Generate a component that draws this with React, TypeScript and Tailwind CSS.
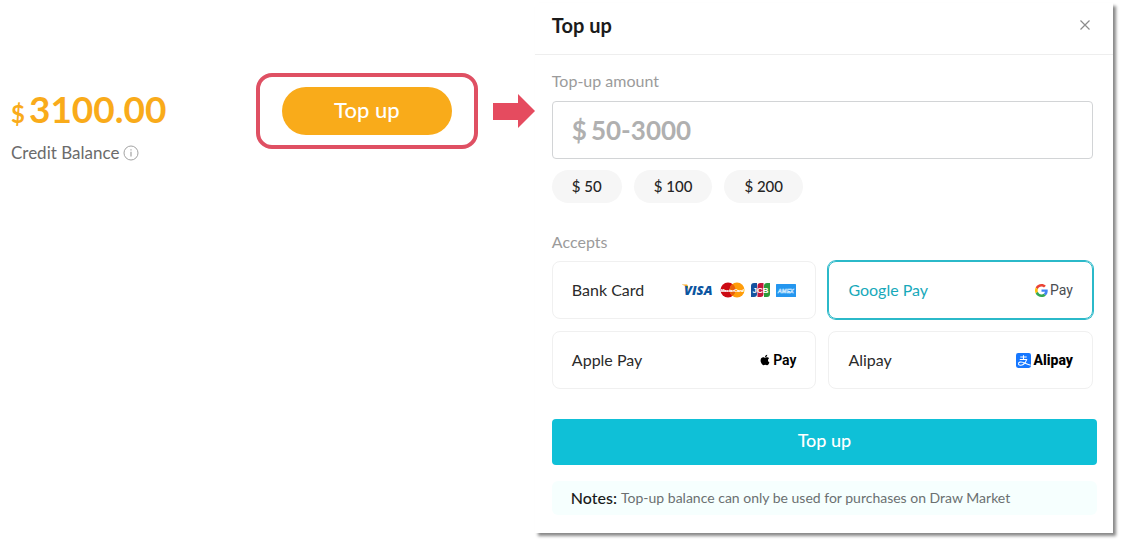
import { useState } from 'react'
import type { ReactNode } from 'react'
import { FaApple } from 'react-icons/fa'
import clsx from 'clsx'

const presets = [50, 100, 200]

function CardLogos() {
  return (
    <span className="flex items-center gap-[6px]">
      <svg width="32" height="20" viewBox="0 0 32 20" aria-label="Visa">
        <path d="M0 4.500h4.200c.9 0 1.400.4 1.600 1.200l.8 4.500C5.500 7.500 3.500 5.600 0 4.800z" fill="#f5a623" />
        <text x="2" y="15" fontSize="13" fontWeight="800" fontStyle="italic" fontFamily="Open Sans, sans-serif" fill="#0b55a0">
          VISA
        </text>
      </svg>
      <svg width="25" height="16" viewBox="0 0 25 16" aria-label="MasterCard">
        <circle cx="8" cy="8" r="7.500" fill="#cc0a14" />
        <circle cx="17" cy="8" r="7.500" fill="#ff9d0a" />
        <path d="M12.500 2a7.500 7.500 0 0 1 0 12a7.500 7.500 0 0 1 0-12z" fill="#e9600c" />
        <text x="12.300" y="9.600" textAnchor="middle" fontSize="4.200" fontWeight="800" fontStyle="italic" fontFamily="Liberation Sans, sans-serif" fill="#fff" stroke="#fff" strokeWidth="0.200">
          MasterCard
        </text>
      </svg>
      <svg width="19" height="14" viewBox="0 0 19 14" aria-label="JCB">
        <path d="M3 0h3v11a3 3 0 0 1-3 3H0V3a3 3 0 0 1 3-3z" fill="#16539f" />
        <path d="M9.500 0h3v11a3 3 0 0 1-3 3h-3V3a3 3 0 0 1 3-3z" fill="#c4183c" />
        <path d="M16 0h3v11a3 3 0 0 1-3 3h-3V3a3 3 0 0 1 3-3z" fill="#2c9a3c" />
        <text x="9.500" y="9.800" textAnchor="middle" fontSize="8" fontWeight="700" fontFamily="Liberation Sans, sans-serif" fill="#fff">
          JCB
        </text>
      </svg>
      <svg width="20" height="13" viewBox="0 0 20 13" aria-label="American Express">
        <rect width="20" height="13" rx="0.500" fill="#2496ef" />
        <text x="9.800" y="8.600" textAnchor="middle" fontSize="5.500" fontWeight="700" fontStyle="italic" fontFamily="Liberation Sans, sans-serif" fill="#2496ef" stroke="#d8eeff" strokeWidth="0.500">
          AMEX
        </text>
      </svg>
    </span>
  )
}

function GooglePayLogo() {
  return (
    <span className="flex items-center gap-[2px] text-[#4a4d51]">
      <svg width="13" height="13" viewBox="0 0 48 48" aria-hidden="true">
        <path fill="#EA4335" d="M24 9.500c3.540 0 6.710 1.220 9.210 3.600l6.850-6.850C35.900 2.380 30.470 0 24 0 14.620 0 6.510 5.380 2.560 13.220l7.980 6.190C12.430 13.720 17.740 9.500 24 9.500z" />
        <path fill="#4285F4" d="M46.980 24.550c0-1.570-.15-3.090-.38-4.550H24v9.020h12.940c-.58 2.960-2.260 5.480-4.780 7.180l7.730 6c4.510-4.180 7.090-10.360 7.090-17.650z" />
        <path fill="#FBBC05" d="M10.530 28.590c-.48-1.450-.76-2.990-.76-4.590s.27-3.140.76-4.590l-7.980-6.190C.92 16.460 0 20.120 0 24c0 3.880.92 7.540 2.560 10.780l7.970-6.190z" />
        <path fill="#34A853" d="M24 48c6.480 0 11.930-2.130 15.890-5.810l-7.730-6c-2.150 1.450-4.920 2.300-8.160 2.300-6.260 0-11.570-4.220-13.470-9.910l-7.980 6.190C6.510 42.620 14.620 48 24 48z" />
      </svg>
      <span className="font-[Roboto,sans-serif] text-sm">Pay</span>
    </span>
  )
}

function ApplePayLogo() {
  return (
    <span className="flex items-center gap-[2px] text-black">
      <FaApple className="size-3" aria-hidden="true" />
      <span className="font-[Roboto,sans-serif] text-sm font-semibold">Pay</span>
    </span>
  )
}

function AlipayLogo() {
  return (
    <span className="flex items-center gap-[3px] text-black">
      <svg width="15" height="15" viewBox="0 0 28 28" fill="none" aria-hidden="true">
        <rect width="28" height="28" rx="4" fill="#1677ff" />
        <path
          d="M8 7.500h12M14 4v7.500M7 12h13c-1 4-3.500 7.500-6.500 9.500-3 2-8.500 2-9-1.200-.4-3.300 4.500-4.500 8.500-2.800 4.500 2 8.500 4 14.500 5.500"
          stroke="#fff"
          strokeWidth="2"
        />
      </svg>
      <span className="font-[Roboto,sans-serif] text-sm font-extrabold">Alipay</span>
    </span>
  )
}

const methods: { id: string; name: string; logo: ReactNode }[] = [
  { id: 'card', name: 'Bank Card', logo: <CardLogos /> },
  { id: 'google', name: 'Google Pay', logo: <GooglePayLogo /> },
  { id: 'apple', name: 'Apple Pay', logo: <ApplePayLogo /> },
  { id: 'alipay', name: 'Alipay', logo: <AlipayLogo /> },
]

function Balance() {
  return (
    <section className="flex flex-1 items-start justify-between pt-[73px] pl-[11px]">
      <div className="pt-4">
        <p className="flex items-baseline gap-1 font-bold text-[#f9ab1a]">
          <span className="text-2xl">$</span>
          <span className="text-[37px] leading-10">3100.00</span>
        </p>
        <p className="mt-[11px] flex items-center gap-1 text-[17px] leading-6 text-[#6b6b6b]">
          Credit Balance
          <svg width="16" height="16" viewBox="0 0 16 16" fill="none" stroke="#a3a3a3" aria-hidden="true">
            <circle cx="8" cy="8" r="7" />
            <path d="M8 6.800v4.700M8 4.200v1.300" strokeWidth="1.200" />
          </svg>
        </p>
      </div>

      <div className="flex items-center gap-[15px]">
        <div className="rounded-2xl border-4 border-[#df5063] px-[22px] py-[10px]">
          <button type="button" className="h-12 w-[170px] rounded-full bg-[#f9ab1a] pb-1 text-[22px] font-medium text-white">
            Top up
          </button>
        </div>
        <svg width="42" height="34" viewBox="0 0 42 34" aria-hidden="true">
          <path d="M0 9h25V0l17 17-17 17V26H0z" fill="#e54b5f" />
        </svg>
      </div>
    </section>
  )
}

function TopUpDialog() {
  const [amount, setAmount] = useState('')
  const [method, setMethod] = useState('google')

  return (
    <section className="mt-[3px] mr-[14px] w-[51.3%] bg-white shadow-[3px_3px_3px_#888]">
      {/* Header */}
      <header className="flex h-[52px] items-center justify-between border-b border-[#eeeeee] pr-[22px] pb-2 pl-[17px]">
        <h1 className="text-xl font-bold text-[#1b1b1b]">Top up</h1>
        <button type="button" aria-label="Close" className="text-[#8c8c8c]">
          <svg width="12" height="12" viewBox="0 0 12 12" stroke="currentColor" strokeWidth="1.200" aria-hidden="true">
            <path d="M1.500 1.500l9 9M10.500 1.500l-9 9" />
          </svg>
        </button>
      </header>

      <form className="pt-[14px] pr-4 pb-[18px] pl-[17px]" onSubmit={(e) => e.preventDefault()}>
        <div className="pr-1">
          {/* Amount */}
          <label htmlFor="amount" className="block text-base text-[#9b9b9b]">
            Top-up amount
          </label>
          <div className="mt-2 flex h-[58px] items-center gap-1 rounded border border-[#d2d4d6] px-[19px] text-[26px] font-bold text-[#b0b0b0]">
            <span>$</span>
            <input
              id="amount"
              value={amount}
              onChange={(e) => setAmount(e.target.value)}
              placeholder="50-3000"
              inputMode="numeric"
              className="min-w-0 flex-1 bg-transparent text-[#1b1b1b] outline-none placeholder:text-[#b0b0b0]"
            />
          </div>
          <div className="mt-[11px] flex gap-3">
            {presets.map((value) => (
              <button
                key={value}
                type="button"
                onClick={() => setAmount(String(value))}
                className="h-[33px] rounded-full bg-[#f6f6f6] px-5 text-[15px] font-medium text-[#252525]"
              >
                $ {value}
              </button>
            ))}
          </div>

          {/* Payment methods */}
          <fieldset className="mt-[27px]">
            <legend className="text-base text-[#9b9b9b]">Accepts</legend>
            <div className="mt-[7px] grid grid-cols-2 gap-3">
              {methods.map(({ id, name, logo }) => (
                <label
                  key={id}
                  className={clsx(
                    'relative flex h-[58px] cursor-pointer items-center justify-between rounded-lg border px-[19px] text-base',
                    method === id
                      ? 'border-[#2bb9c9] text-[#18a9ba] ring-1 ring-[#2bb9c9]'
                      : 'border-[#f0f0f0] text-[#2b2b2b]',
                  )}
                >
                  <input
                    type="radio"
                    name="method"
                    value={id}
                    checked={method === id}
                    onChange={() => setMethod(id)}
                    className="sr-only"
                  />
                  <span>{name}</span>
                  {logo}
                </label>
              ))}
            </div>
          </fieldset>
        </div>

        <button type="submit" className="mt-[30px] h-[46px] w-full rounded bg-[#0fc0d7] pb-1 text-lg font-medium text-white">
          Top up
        </button>

        <p className="mt-4 flex h-[34px] items-center gap-1 rounded-md bg-[#f6fffe] px-[19px] text-sm text-[#6b7071]">
          <span className="text-base font-medium text-[#1b1b1b]">Notes:</span>
          Top-up balance can only be used for purchases on Draw Market
        </p>
      </form>
    </section>
  )
}

export default function App() {
  return (
    <main className="flex min-h-screen items-start bg-white font-[Lato,sans-serif]">
      <Balance />
      <TopUpDialog />
    </main>
  )
}
